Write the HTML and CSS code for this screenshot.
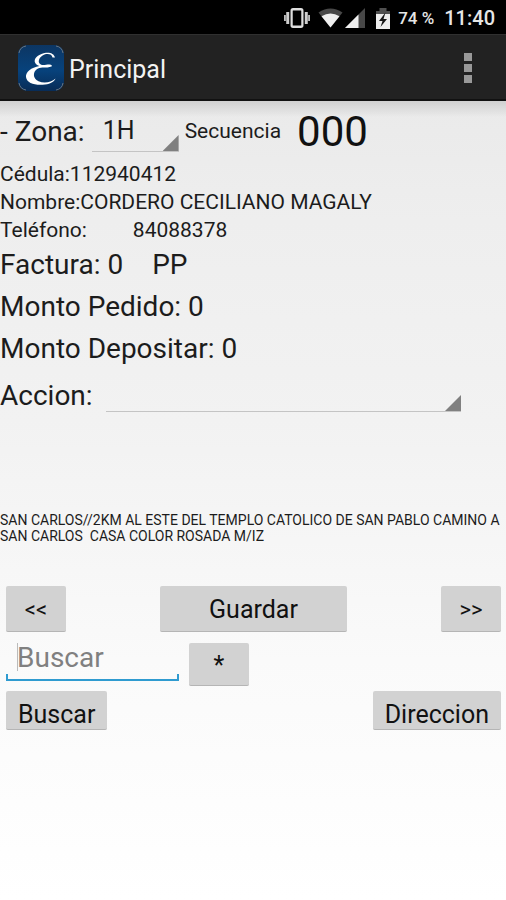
FILE: index.html
```html
<!DOCTYPE html>
<html lang="es">
<head>
<meta charset="utf-8">
<meta name="viewport" content="width=device-width, initial-scale=1">
<title>Principal</title>
<link rel="stylesheet" href="styles.css">
</head>
<body>
<div class="status">
  <svg class="vibrate" width="26" height="20" viewBox="0 0 28 20" preserveAspectRatio="none" aria-hidden="true">
    <rect x="8.200" y="1.200" width="11.600" height="17.600" rx="1.500" fill="none" stroke="#dedede" stroke-width="2.400"/>
    <path d="M1 7v6M27 7v6" stroke="#bdbdbd" stroke-width="2"/>
    <path d="M4 4v12M24 4v12" stroke="#cfcfcf" stroke-width="3.200"/>
  </svg>
  <svg class="wifi" width="25" height="20" viewBox="0 0 25 20" aria-hidden="true">
    <path d="M.5 4.500Q12.500-3.500 24.500 4.500L12.500 19.500Z" fill="#484848"/>
    <path d="M3.500 8.200Q12.500 2.800 21.500 8.200L12.500 19.500Z" fill="#f0f0f0"/>
  </svg>
  <svg class="signal" width="20" height="20" viewBox="0 0 20 20" aria-hidden="true">
    <path d="M20 0v20H0Z" fill="#484848"/>
    <path d="M13.500 6.500V20H0Z" fill="#f0f0f0"/>
  </svg>
  <svg class="battery" width="14" height="21" viewBox="0 0 14 21" aria-hidden="true">
    <path d="M0 3h3.500V0h7v3H14v4H0Z" fill="#505050"/>
    <path d="M0 6h14v15H0Z" fill="#ededed"/>
    <path d="M9.500 4.500 3 13h3.500L4.500 19 11 11H7.500Z" fill="#161616"/>
  </svg>
  <span class="percent">74 %</span>
  <span class="clock">11:40</span>
</div>
<header class="bar">
  <svg class="logo" width="46" height="46" viewBox="0 0 46 46" aria-hidden="true">
    <defs><linearGradient id="blue" x1="0" y1="0" x2="0" y2="1"><stop offset="0" stop-color="#0c3663"/><stop offset=".55" stop-color="#07427c"/><stop offset="1" stop-color="#082c57"/></linearGradient></defs>
    <rect width="46" height="46" rx="9" fill="url(#blue)"/>
    <path d="M1 8Q2 2 8 1M38 1Q44 2 45 8M1 38Q2 44 8 45M38 45Q44 44 45 38" fill="none" stroke="#667482" stroke-width="1"/>
    <path d="M37 12.500C36 8 31 7 26.500 8C19.500 9.500 15.500 14 17 17.500C17.800 19.500 19.500 20.500 21.500 21C13 22.500 7.500 27 8 32C8.600 38.500 18 40.800 27 39.500C33 38.700 36.500 36.500 37.500 33.500C33 37.500 26 38.500 20.500 36.200C14.500 33.500 14.500 26.500 20 23.500C23.500 21.700 28 23.500 33.500 21.500C34.500 21 33.500 19.500 31.500 19.500C28 19.500 26 20.600 23.200 19.800C18.600 18 21 11.500 26.500 9.600C30.500 8.400 34 9.500 34.500 12.500Z" fill="#fff"/>
  </svg>
  <h1 class="title">Principal</h1>
  <button class="more" type="button" aria-label="Más opciones"><i></i><i></i><i></i></button>
</header>
<main class="screen">
  <div class="zone">
    <label class="large" for="zona">- Zona:</label>
    <span class="spinner zone-pick"><select id="zona"><option>1H</option></select></span>
    <span class="small">Secuencia</span>
    <span class="count">000</span>
  </div>
  <div class="line">Cédula:112940412</div>
  <div class="line">Nombre:CORDERO CECILIANO MAGALY</div>
  <div class="line phone"><span>Teléfono:</span><span>84088378</span></div>
  <div class="total bill"><span>Factura: 0</span><span>PP</span></div>
  <div class="total">Monto Pedido: 0</div>
  <div class="total">Monto Depositar: 0</div>
  <div class="action">
    <label class="large" for="accion">Accion:</label>
    <span class="spinner action-pick"><select id="accion"><option></option></select></span>
  </div>
  <p class="address">SAN CARLOS//2KM AL ESTE DEL TEMPLO CATOLICO DE SAN PABLO CAMINO A SAN CARLOS&nbsp; CASA COLOR ROSADA M/IZ</p>
  <div class="nav">
    <button class="btn square" type="button">&lt;&lt;</button>
    <button class="btn save" type="button">Guardar</button>
    <button class="btn square" type="button">&gt;&gt;</button>
  </div>
  <div class="search">
    <div class="field"><input type="text" placeholder="Buscar" aria-label="Buscar"></div>
    <button class="btn square star" type="button">*</button>
  </div>
  <div class="foot">
    <button class="btn low" type="button">Buscar</button>
    <button class="btn low" type="button">Direccion</button>
  </div>
</main>
</body>
</html>
```
FILE: styles.css
```css
* { box-sizing: border-box; }
body {
  margin: 0;
  min-height: 100vh;
  display: flex;
  flex-direction: column;
  font-family: Roboto, "Liberation Sans", sans-serif;
  color: #1c1c1c;
  background: #fff;
}
button, input, select { font: inherit; color: inherit; margin: 0; }
.status {
  height: 34px;
  padding: 2px 11px 0 0;
  display: flex;
  align-items: center;
  justify-content: flex-end;
  background: #000;
  color: #e6e6e6;
}
.vibrate { margin-right: 8px; }
.wifi { margin-right: 2px; }
.signal { margin-right: 11px; }
.battery { margin-right: 8px; }
.percent { font-size: 17px; font-weight: 500; margin-right: 10px; }
.clock { font-size: 20px; font-weight: 500; }
.bar {
  height: 67px;
  padding: 2px 24px 0 18px;
  display: flex;
  align-items: center;
  background: #222;
  border-top: 1px solid #303030;
  border-bottom: 2px solid #111;
}
.title { margin: 0 auto 0 5px; padding-top: 2px; font-size: 25px; font-weight: 400; color: #f3f3f3; }
.more {
  padding: 0 10px;
  display: flex;
  flex-direction: column;
  gap: 3px;
  border: 0;
  background: none;
}
.more i { width: 8px; height: 8px; background: #999; }
.screen {
  flex: 1;
  padding-top: 1px;
  background:
    linear-gradient(#d0d0d0, #d0d0d000) top / 100% 16px no-repeat,
    linear-gradient(#eaeaea, #eeeeee 15%, #f2f2f2 40%, #fafafa 70%, #fff);
}
.zone { height: 58px; display: flex; align-items: center; }
.large { font-size: 28px; }
.small { font-size: 21px; margin-left: 6px; }
.count { font-size: 42px; margin-left: 16px; color: #111; }
.spinner { position: relative; border-bottom: 1px solid #c4c4c4; }
.spinner::after {
  content: "";
  position: absolute;
  right: 0;
  bottom: 0;
  width: 16px;
  height: 16px;
  background: #808080;
  clip-path: polygon(100% 0, 100% 100%, 0 100%);
  pointer-events: none;
}
.spinner select {
  display: block;
  width: 100%;
  height: 100%;
  padding: 0 11px;
  border: 0;
  background: none;
  appearance: none;
  font-size: 25px;
}
.zone-pick { width: 87px; height: 42px; margin-left: 7px; }
.line { font-size: 21px; line-height: 28px; }
.phone { display: flex; gap: 46px; }
.total { font-size: 28px; line-height: 42px; }
.bill { display: flex; gap: 29px; }
.action { height: 50px; padding-right: 45px; display: flex; align-items: center; }
.action-pick { flex: 1; height: 34px; margin-left: 13px; }
.address { margin: 92px 0 42px; font-size: 14px; line-height: 16px; }
.btn {
  padding: 3px 12px 0;
  font-size: 25px;
  line-height: 30px;
  color: #111;
  background: #d2d2d2;
  border: 0;
  border-bottom: 1px solid #b5b5b5;
  border-radius: 2px;
}
.nav { padding: 0 5px 0 6px; display: flex; justify-content: space-between; }
.nav .btn { height: 46px; }
.square { width: 60px; }
.nav .square { font-size: 22px; }
.save { width: 187px; }
.search { padding: 11px 6px 0; display: flex; gap: 10px; align-items: flex-start; }
.star { height: 43px; }
.field {
  position: relative;
  width: 173px;
  height: 38px;
  border-bottom: 2px solid #2f9bd0;
}
.field::after {
  content: "";
  position: absolute;
  inset: auto 0 0;
  height: 5px;
  border: solid #2f9bd0;
  border-width: 0 2px;
  pointer-events: none;
}
.field input {
  display: block;
  width: 100%;
  height: 28px;
  padding: 0 11px;
  border: 0;
  outline: 0;
  background: linear-gradient(#bbb, #bbb) 11px 0 / 1px 100% no-repeat;
  font-size: 28px;
}
.field input::placeholder { color: #808080; opacity: 1; }
.foot { padding: 5px 5px 0 6px; display: flex; justify-content: space-between; }
.low { height: 39px; padding-top: 9px; }
```
